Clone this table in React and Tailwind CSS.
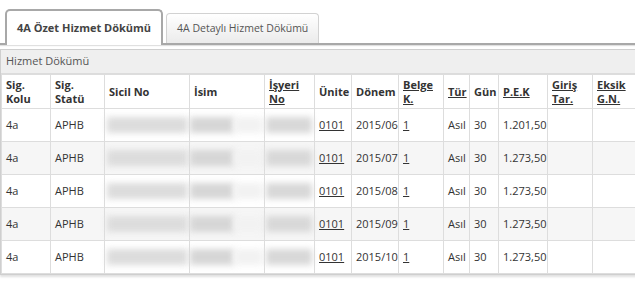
import React from 'react';

const rows = [
    { donem: '2015/06', pek: '1.201,50' },
    { donem: '2015/07', pek: '1.273,50' },
    { donem: '2015/08', pek: '1.273,50' },
    { donem: '2015/09', pek: '1.273,50' },
    { donem: '2015/10', pek: '1.273,50' },
];

// masked personal data
const Masked = ({ w, tone }) => (
    <div className={`h-[16px] ${w} ${tone} blur-[3px]`}></div>
);

const Th = ({ children, link }) => (
    <th className="border border-[#ddd] px-[4px] text-left align-middle font-bold leading-[14px]">
        {link ? <span className="underline">{children}</span> : children}
    </th>
);

const Td = ({ children, className = '' }) => (
    <td className={`border border-[#ddd] px-[4px] align-middle ${className}`}>{children}</td>
);

export default function App() {
    return (
        <div className="w-[635px] h-[281px] overflow-hidden bg-white font-['Open_Sans',sans-serif] text-[11px] text-[#333]">
            {/* Tabs */}
            <div className="h-[45px] pt-[9px] pl-[5px] flex items-end gap-[3px] border-b-2 border-[#a8a8a8] shadow-[0_1px_1px_rgba(0,0,0,0.12)]">
                <div className="-mb-[2px] h-[36px] px-[10px] flex items-center bg-white border-2 border-b-0 border-[#a8a8a8] rounded-t-[5px] font-bold text-[#444]">
                    4A Özet Hizmet Dökümü
                </div>
                <div className="h-[30px] px-[10px] flex items-center border border-b-0 border-[#d2d2d2] rounded-t-[4px] bg-gradient-to-b from-white to-[#ebebeb] text-[#555] text-[10.5px]">
                    4A Detaylı Hizmet Dökümü
                </div>
            </div>

            {/* Panel */}
            <div className="mt-[4px] w-[680px] border border-[#cfcfcf] shadow-[0_2px_2px_rgba(0,0,0,0.12)]">
                <div className="h-[24px] px-[5px] flex items-center bg-[#efefef] border-b border-[#dcdcdc] text-[#555]">
                    Hizmet Dökümü
                </div>
                <table className="w-[680px] table-fixed border-collapse">
                    <colgroup>
                        <col className="w-[49px]" />
                        <col className="w-[54px]" />
                        <col className="w-[85px]" />
                        <col className="w-[75px]" />
                        <col className="w-[50px]" />
                        <col className="w-[37px]" />
                        <col className="w-[47px]" />
                        <col className="w-[45px]" />
                        <col className="w-[26px]" />
                        <col className="w-[29px]" />
                        <col className="w-[49px]" />
                        <col className="w-[45px]" />
                        <col className="w-[89px]" />
                    </colgroup>
                    <thead>
                        <tr className="h-[34px]">
                            <Th>Sig.<br />Kolu</Th>
                            <Th>Sig.<br />Statü</Th>
                            <Th>Sicil No</Th>
                            <Th>İsim</Th>
                            <Th link>İşyeri<br />No</Th>
                            <Th>Ünite</Th>
                            <Th>Dönem</Th>
                            <Th link>Belge<br />K.</Th>
                            <Th link>Tür</Th>
                            <Th>Gün</Th>
                            <Th link>P.E.K</Th>
                            <Th link>Giriş<br />Tar.</Th>
                            <Th link>Eksik<br />G.N.</Th>
                        </tr>
                    </thead>
                    <tbody>
                        {rows.map((r, i) => (
                            <tr key={r.donem} className={`h-[33px] ${i % 2 ? 'bg-[#f6f6f6]' : 'bg-white'}`}>
                                <Td>4a</Td>
                                <Td>APHB</Td>
                                <Td className="!px-[2px]"><Masked w="w-[80px]" tone="bg-[#dcdcdc]" /></Td>
                                <Td className="!px-0">
                                    <div className="flex">
                                        <Masked w="w-[44px]" tone="bg-[#d6d6d6]" />
                                        <Masked w="w-[28px]" tone="bg-[#f2f2f2]" />
                                    </div>
                                </Td>
                                <Td className="!px-[1px]"><Masked w="w-[46px]" tone="bg-[#d8d8d8]" /></Td>
                                <Td><span className="underline">0101</span></Td>
                                <Td>{r.donem}</Td>
                                <Td><span className="underline">1</span></Td>
                                <Td>Asıl</Td>
                                <Td>30</Td>
                                <Td>{r.pek}</Td>
                                <Td></Td>
                                <Td></Td>
                            </tr>
                        ))}
                    </tbody>
                </table>
            </div>
        </div>
    );
}
